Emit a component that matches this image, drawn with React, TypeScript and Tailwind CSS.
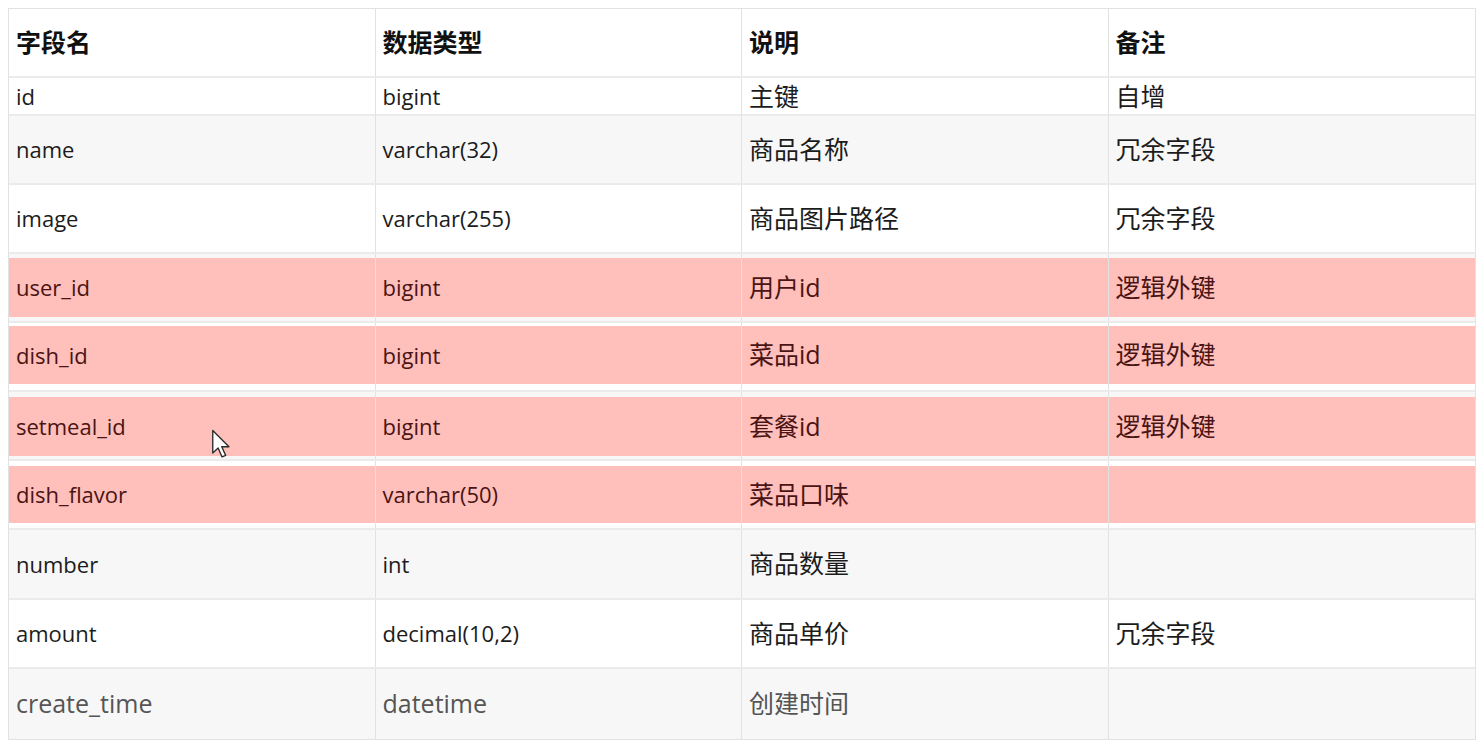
type Row = {
  field: string;
  type: string;
  desc: string;
  note: string;
  h: string;
  bg: string;
  mark?: string; // inset classes for the red highlight band
  last?: boolean;
};

const rows: Row[] = [
  { field: "id", type: "bigint", desc: "主键", note: "自增", h: "h-[38px]", bg: "bg-white" },
  { field: "name", type: "varchar(32)", desc: "商品名称", note: "冗余字段", h: "h-[69px]", bg: "bg-[#f7f7f7]" },
  { field: "image", type: "varchar(255)", desc: "商品图片路径", note: "冗余字段", h: "h-[69px]", bg: "bg-white" },
  { field: "user_id", type: "bigint", desc: "用户id", note: "逻辑外键", h: "h-[69px]", bg: "bg-[#f7f7f7]", mark: "pt-[4px] pb-[4px]" },
  { field: "dish_id", type: "bigint", desc: "菜品id", note: "逻辑外键", h: "h-[69px]", bg: "bg-white", mark: "pt-[3px] pb-[6px]" },
  { field: "setmeal_id", type: "bigint", desc: "套餐id", note: "逻辑外键", h: "h-[69px]", bg: "bg-[#f7f7f7]", mark: "pt-[5px] pb-[3px]" },
  { field: "dish_flavor", type: "varchar(50)", desc: "菜品口味", note: "", h: "h-[69px]", bg: "bg-white", mark: "pt-[5px] pb-[5px]" },
  { field: "number", type: "int", desc: "商品数量", note: "", h: "h-[70px]", bg: "bg-[#f7f7f7]" },
  { field: "amount", type: "decimal(10,2)", desc: "商品单价", note: "冗余字段", h: "h-[69px]", bg: "bg-white" },
  { field: "create_time", type: "datetime", desc: "创建时间", note: "", h: "h-[70px]", bg: "bg-[#f7f7f7]", last: true },
];

const FONT = "font-['Open_Sans','Noto_Sans_CJK_SC',sans-serif]";

function Cell({ text, cjk, row, end }: { text: string; cjk?: boolean; row: Row; end?: boolean }) {
  const size = row.last || cjk ? "text-[25px]" : "text-[22px]";
  const color = row.mark ? "text-[#4a1414]" : row.last ? "text-[#555555]" : "text-[#1c1c1c]";
  const inner = (
    <div className={`flex h-full items-center pl-[7px] ${size} ${color}`}>{text}</div>
  );
  return (
    <div className={`flex h-full flex-col ${end ? "" : "border-r border-[#e2e2e2]"} ${row.mark ?? ""}`}>
      {row.mark ? <div className="flex-1 bg-[#ffbfba]">{inner}</div> : inner}
    </div>
  );
}

function Cursor() {
  return (
    <svg
      className="pointer-events-none absolute left-[210px] top-[429px]"
      width="22"
      height="30"
      viewBox="0 0 13 20"
    >
      <path
        d="M1 1 L1 16 L4.6 12.6 L7.2 18.6 L9.6 17.6 L7 11.8 L11.8 11.8 Z"
        fill="#ffffff"
        stroke="#2a2a2a"
        strokeWidth="0.9"
        strokeLinejoin="round"
      />
    </svg>
  );
}

export default function App() {
  return (
    <div className={`relative min-h-[745px] w-[1484px] bg-white p-[8px] ${FONT}`}>
      <div className="w-[1468px] border border-[#e2e2e2]">
        {/* header */}
        <div className="grid h-[69px] grid-cols-4 border-b-2 border-[#ebebeb] bg-white">
          {["字段名", "数据类型", "说明", "备注"].map((t, i) => (
            <div
              key={t}
              className={`flex items-center pl-[7px] text-[25px] font-bold text-[#111111] ${i < 3 ? "border-r border-[#e2e2e2]" : ""}`}
            >
              {t}
            </div>
          ))}
        </div>

        {rows.map((r, i) => (
          <div
            key={r.field}
            className={`grid grid-cols-4 ${r.h} ${r.bg} ${i < rows.length - 1 ? "border-b-2 border-[#ebebeb]" : ""}`}
          >
            <Cell text={r.field} row={r} />
            <Cell text={r.type} row={r} />
            <Cell text={r.desc} cjk row={r} />
            <Cell text={r.note} cjk row={r} end />
          </div>
        ))}
      </div>
      <Cursor />
    </div>
  );
}
